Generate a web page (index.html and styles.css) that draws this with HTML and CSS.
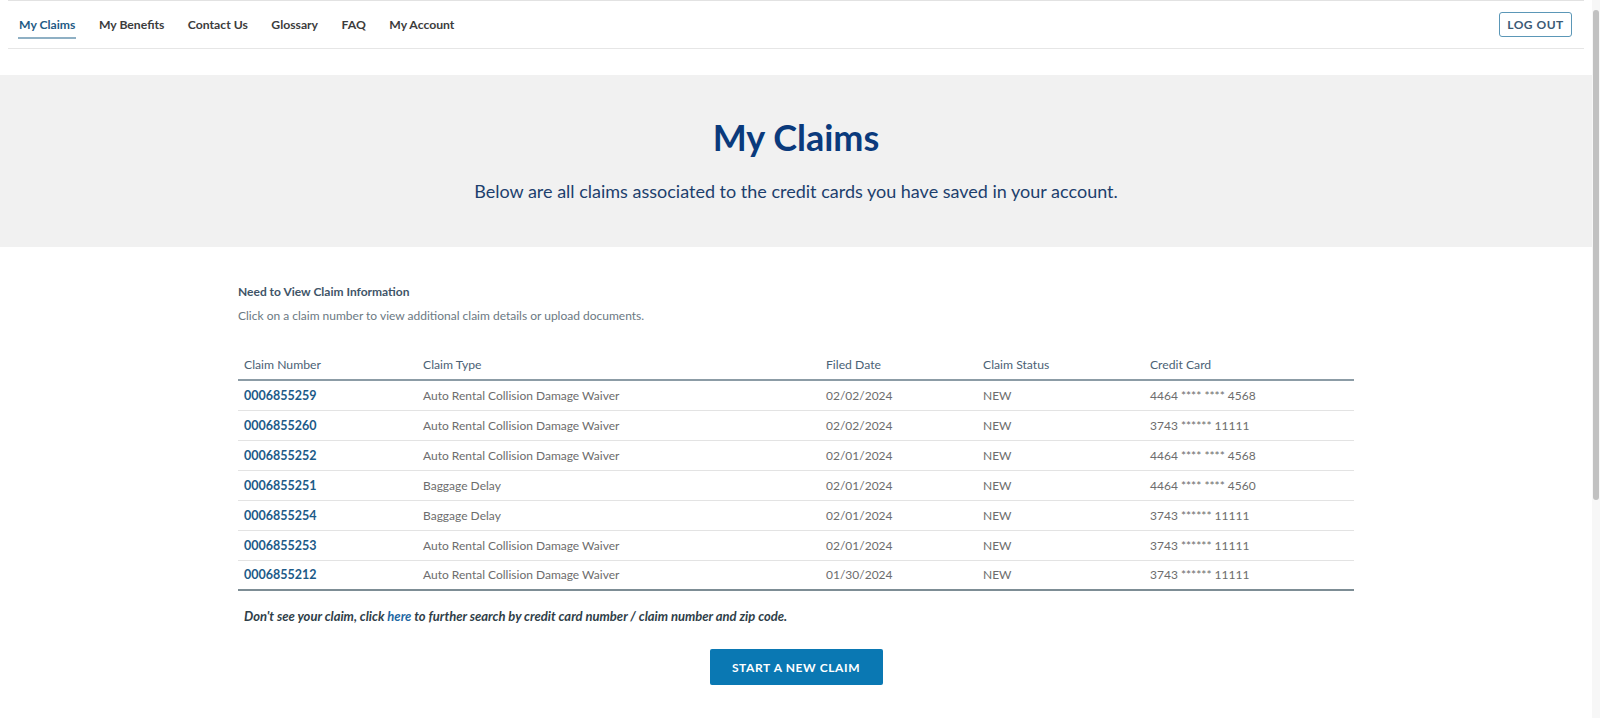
FILE: index.html
```html
<!DOCTYPE html>
<html lang="en">
<head>
<meta charset="utf-8">
<title>My Claims</title>
<link rel="stylesheet" href="styles.css">
</head>
<body>
<div class="page">
  <div class="main">
    <header class="header">
      <nav class="nav">
        <a class="nav-item active" href="#">My Claims</a>
        <a class="nav-item" href="#">My Benefits</a>
        <a class="nav-item" href="#">Contact Us</a>
        <a class="nav-item" href="#">Glossary</a>
        <a class="nav-item" href="#">FAQ</a>
        <a class="nav-item" href="#">My Account</a>
      </nav>
      <button class="logout">LOG OUT</button>
    </header>

    <section class="hero">
      <h1 class="hero-title">My Claims</h1>
      <p class="hero-sub">Below are all claims associated to the credit cards you have saved in your account.</p>
    </section>

    <section class="content">
      <h2 class="info-title">Need to View Claim Information</h2>
      <p class="info-text">Click on a claim number to view additional claim details or upload documents.</p>

      <table class="claims">
        <colgroup>
          <col class="c-num"><col class="c-type"><col class="c-date"><col class="c-status"><col class="c-card">
        </colgroup>
        <thead>
          <tr><th>Claim Number</th><th>Claim Type</th><th>Filed Date</th><th>Claim Status</th><th>Credit Card</th></tr>
        </thead>
        <tbody>
          <tr><td><a class="claim-link" href="#">0006855259</a></td><td>Auto Rental Collision Damage Waiver</td><td>02/02/2024</td><td>NEW</td><td>4464 **** **** 4568</td></tr>
          <tr><td><a class="claim-link" href="#">0006855260</a></td><td>Auto Rental Collision Damage Waiver</td><td>02/02/2024</td><td>NEW</td><td>3743 ****** 11111</td></tr>
          <tr><td><a class="claim-link" href="#">0006855252</a></td><td>Auto Rental Collision Damage Waiver</td><td>02/01/2024</td><td>NEW</td><td>4464 **** **** 4568</td></tr>
          <tr><td><a class="claim-link" href="#">0006855251</a></td><td>Baggage Delay</td><td>02/01/2024</td><td>NEW</td><td>4464 **** **** 4560</td></tr>
          <tr><td><a class="claim-link" href="#">0006855254</a></td><td>Baggage Delay</td><td>02/01/2024</td><td>NEW</td><td>3743 ****** 11111</td></tr>
          <tr><td><a class="claim-link" href="#">0006855253</a></td><td>Auto Rental Collision Damage Waiver</td><td>02/01/2024</td><td>NEW</td><td>3743 ****** 11111</td></tr>
          <tr><td><a class="claim-link" href="#">0006855212</a></td><td>Auto Rental Collision Damage Waiver</td><td>01/30/2024</td><td>NEW</td><td>3743 ****** 11111</td></tr>
        </tbody>
      </table>

      <p class="search-note">Don't see your claim, click <a href="#">here</a> to further search by credit card number / claim number and zip code.</p>

      <div class="actions">
        <button class="primary">START A NEW CLAIM</button>
      </div>
    </section>
  </div>
  <div class="scrollbar"><div class="thumb"></div></div>
</div>
</body>
</html>
```
FILE: styles.css
```css
* { box-sizing: border-box; }
html, body { margin: 0; padding: 0; height: 100%; }
body {
  font-family: "Lato", "Open Sans", Arial, sans-serif;
  color: #5d6a73;
  background: #fff;
  overflow: hidden;
}
.page { display: flex; height: 718px; }
.main { flex: 1; min-width: 0; }

.scrollbar {
  width: 8px;
  background: #f7f7f7;
  padding: 10px 1px 0 1px;
}
.thumb {
  height: 490px;
  background: #c1c1c1;
  border-radius: 3px;
}

.header {
  margin: 0 8px;
  height: 49px;
  border-top: 1px solid #e2e2e2;
  border-bottom: 1px solid #e6e6e6;
  display: flex;
  align-items: center;
  justify-content: space-between;
  padding: 0 12px 1px 11px;
}
.nav { display: flex; gap: 23.5px; align-self: stretch; }
.nav-item {
  display: flex;
  align-items: center;
  font-size: 12.2px;
  font-weight: 700;
  color: #3c3c3c;
  text-decoration: none;
  position: relative;
}
.nav-item.active { color: #1f5b85; }
.nav-item.active::after {
  content: "";
  position: absolute;
  left: -1px; right: -1px;
  top: 36px;
  height: 2px;
  background: #8fb0c4;
}
.logout {
  font-family: inherit;
  width: 73px;
  height: 25px;
  background: #fff;
  border: 1px solid #5b97b7;
  border-radius: 3px;
  font-size: 12px;
  font-weight: 700;
  letter-spacing: 0.5px;
  color: #3a5a75;
  padding: 0;
}

.hero {
  margin-top: 26px;
  height: 172px;
  background: #f1f1f1;
  text-align: center;
  padding-top: 40px;
}
.hero-title {
  margin: 0;
  font-size: 36px;
  line-height: 44px;
  font-weight: 700;
  color: #0a3a7c;
}
.hero-sub {
  margin: 21px 0 0;
  font-size: 18px;
  line-height: 22px;
  color: #1d3f6d;
}

.content {
  width: 1116px;
  margin: 0 auto;
  padding-top: 37px;
}
.info-title {
  margin: 0;
  font-size: 12px;
  line-height: 16px;
  font-weight: 700;
  color: #3f5568;
}
.info-text {
  margin: 8px 0 0;
  font-size: 12px;
  line-height: 16px;
  color: #6b7983;
}

.claims {
  margin-top: 25px;
  width: 100%;
  border-collapse: collapse;
  font-size: 12px;
}
.c-num { width: 179px; }
.c-type { width: 403px; }
.c-date { width: 157px; }
.c-status { width: 167px; }
.c-card { width: 210px; }
.claims th {
  text-align: left;
  font-weight: 400;
  color: #4b6275;
  padding: 0 6px;
  height: 31px;
  vertical-align: middle;
  border-bottom: 2px solid #8c9ca6;
  font-size: 12.2px;
}
.claims td {
  padding: 0 6px;
  height: 30px;
  color: #6d6d6d;
  border-bottom: 1px solid #e3e3e3;
}
.claims tbody tr:last-child td { border-bottom: 2px solid #7d8d95; }
.claim-link {
  color: #1c5a88;
  font-weight: 700;
  text-decoration: none;
  font-size: 12.5px;
}

.search-note {
  margin: 17px 0 0 6px;
  font-size: 13px;
  line-height: 16px;
  font-weight: 700;
  font-style: italic;
  color: #2f3e48;
}
.search-note a { color: #1d67a3; text-decoration: none; }

.actions { display: flex; justify-content: center; margin-top: 25px; }
.primary {
  font-family: inherit;
  width: 173px;
  height: 36px;
  border: none;
  border-radius: 2px;
  background: #0a78b3;
  color: #fff;
  font-size: 12px;
  font-weight: 700;
  letter-spacing: 0.6px;
}
```
